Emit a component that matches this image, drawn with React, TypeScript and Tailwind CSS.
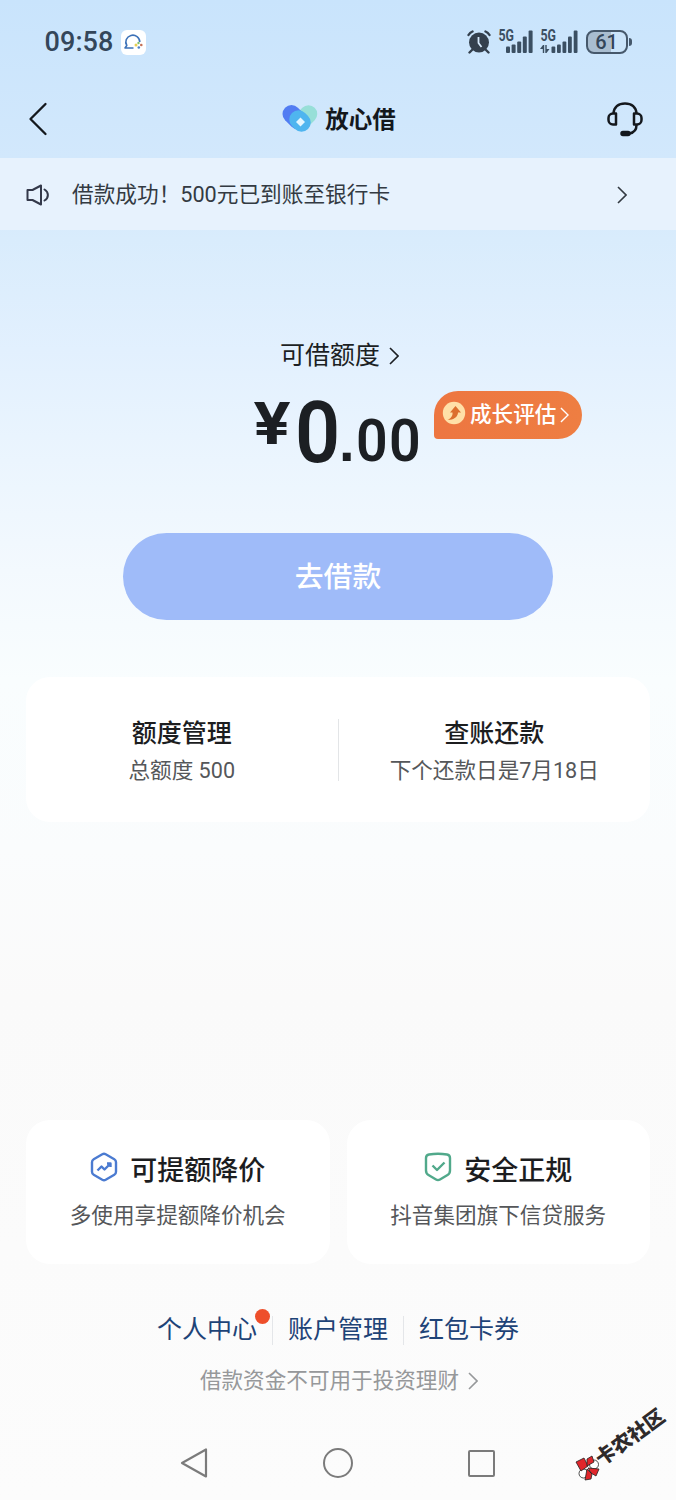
import React from "react";

const services = [
  { title: "额度管理", desc: "总额度 500" },
  { title: "查账还款", desc: "下个还款日是7月18日" },
];

const links = ["个人中心", "账户管理", "红包卡券"];

function Chevron({ className }: { className?: string }) {
  return (
    <svg
      viewBox="0 0 10 18"
      fill="none"
      stroke="currentColor"
      strokeWidth="1.6"
      className={className}
    >
      <path d="M1 1l8 8-8 8" />
    </svg>
  );
}

function Signal({ data }: { data?: boolean }) {
  return (
    <svg
      viewBox="0 -4 38 36"
      className="w-[38px] h-9 overflow-visible text-[#3b4f62]"
    >
      <text
        x="0.5"
        y="13"
        fontSize="16"
        fontWeight="700"
        fill="currentColor"
        textLength="15.5"
        lengthAdjust="spacingAndGlyphs"
      >
        5G
      </text>
      <g fill="currentColor">
        {data ? (
          <>
            <rect x="11.5" y="18.5" width="3.8" height="6.5" rx="1" />
            <rect x="17" y="16.5" width="3.8" height="8.5" rx="1" />
            <rect x="22.5" y="13.5" width="3.8" height="11.5" rx="1" />
            <rect x="28" y="8.5" width="3.8" height="16.5" rx="1" />
            <rect x="33.7" y="2.5" width="3.8" height="22.5" rx="1" />
            <path d="M0 21l3-4h1.200v8H2.800v-4zM9.500 21l-3 4H5.300v-8h1.400v4z" />
          </>
        ) : (
          <>
            <rect x="8" y="18.5" width="4" height="6.5" rx="1" />
            <rect x="13.6" y="16.5" width="4" height="8.5" rx="1" />
            <rect x="19.2" y="13.5" width="4" height="11.5" rx="1" />
            <rect x="24.8" y="8.5" width="4" height="16.5" rx="1" />
            <rect x="30.6" y="2.5" width="4" height="22.5" rx="1" />
          </>
        )}
      </g>
    </svg>
  );
}

function StatusBar() {
  return (
    <div className="h-[80px] pt-[28px] pl-[44.5px] pr-[44px] flex items-start justify-between text-[#34465a]">
      <div className="flex items-center h-7">
        <span className="text-[27px] leading-7 font-medium tracking-[0.1px]">
          09:58
        </span>
        <span className="ml-[7px] w-[25px] h-[25px] rounded-md bg-white flex items-center justify-center">
          <svg viewBox="0 0 22 20" className="w-[22px] h-5" fill="none">
            <path
              d="M11.500 16H3l1.800-2.500a7 6.800 0 1 1 13-3.500"
              stroke="#3d72b8"
              strokeWidth="1.6"
              strokeLinejoin="round"
            />
            <circle cx="14" cy="13" r="1.5" fill="#e9cf52" />
            <circle cx="16.5" cy="11" r="1.2" fill="#7cbd6a" />
            <circle cx="19.3" cy="13" r="1.3" fill="#c56f55" />
            <circle cx="16.8" cy="15.5" r="1.3" fill="#4d80c4" />
          </svg>
        </span>
      </div>
      <div className="flex items-center h-7">
        <svg viewBox="0 0 24 24" className="w-6 h-6 mr-[7px]" fill="none">
          <circle cx="12" cy="12.5" r="10" fill="#34404d" />
          <path
            d="M1.500 5Q3 2.500 5.500 1.500M22.500 5Q21 2.500 18.500 1.500M5 20l-2.500 2.500M19 20l2.500 2.500"
            stroke="#34404d"
            strokeWidth="2.4"
            strokeLinecap="round"
          />
          <path d="M11.500 7v6l3 4" stroke="#d5e8fa" strokeWidth="1.8" />
        </svg>
        <Signal />
        <span className="w-[4px]" />
        <Signal data />
        <span className="ml-[8px] w-[42px] h-[24px] rounded-[8px] border-2 border-[#46586b] bg-linear-to-r from-[#a9bdd0] from-60% to-[#cbe4fa] to-60% flex items-center justify-center text-[20px] leading-none font-medium">
          61
        </span>
        <span className="ml-[1.5px] w-[3px] h-2 rounded-r bg-[#46586b]" />
      </div>
    </div>
  );
}

function Header() {
  return (
    <div className="h-[78px] pl-[28px] pr-[32px] flex items-center justify-between text-[#14181d]">
      <svg
        viewBox="0 0 20 34"
        className="w-5 h-[34px]"
        fill="none"
        stroke="currentColor"
        strokeWidth="2.3"
        strokeLinecap="round"
        strokeLinejoin="round"
      >
        <path d="M17.500 2L2.500 17l15 15" />
      </svg>
      <div className="flex items-center ml-[24px]">
        <svg
          viewBox="0 0 36 30"
          className="w-9 h-[30px] mr-[7px] -translate-y-px"
          strokeLinecap="round"
        >
          <path d="M26.500 11L20 17.500" stroke="#97dfd8" strokeWidth="17.5" />
          <path d="M9.500 11l6.500 6.500" stroke="#527df2" strokeWidth="18" />
          <path d="M16.500 16.500l3 3" stroke="#4fb5ef" strokeWidth="18.5" />
          <path d="M18.500 14.500l4.500 4.500-4.500 4.500-4.500-4.500z" fill="#e4f6ff" />
        </svg>
        <span className="text-[23.5px] leading-8 font-bold translate-y-px">
          放心借
        </span>
      </div>
      <svg
        viewBox="0 0 38 36"
        className="w-[38px] h-9"
        fill="none"
        stroke="currentColor"
        strokeWidth="2.5"
      >
        <path d="M7.500 12.500C8 6 12.500 2.500 19 2.500s11 3.500 11.500 10" />
        <path
          d="M10 12.500H7a4.500 4.500 0 0 0-4.500 4.500v2A4.500 4.500 0 0 0 7 23.500h3zM28 12.500h3a4.500 4.500 0 0 1 4.500 4.500v2a4.500 4.500 0 0 1-4.500 4.500h-3z"
          strokeLinejoin="round"
        />
        <path d="M30.500 24c0 4-2 7.500-7 8.500" />
        <rect x="15.5" y="31" width="8" height="3" rx="1.5" fill="currentColor" />
      </svg>
    </div>
  );
}

function Notice() {
  return (
    <div className="h-[72px] pl-[26px] pr-[49px] flex items-center bg-[#e7f2fd] text-[#333a42]">
      <svg
        viewBox="0 0 24 22"
        className="w-6 h-[22px] mr-[22px] mt-px"
        fill="none"
        stroke="#34394a"
        strokeWidth="2"
        strokeLinejoin="round"
      >
        <path d="M1.500 6h5L15 1.500v19L6.500 16h-5z" />
        <path d="M18.500 5.500c4.500 2.500 4.500 8.500 0 11" strokeLinecap="round" />
      </svg>
      <span className="flex-1 text-[21.66px] leading-8 pt-[2px]">
        借款成功！500元已到账至银行卡
      </span>
      <Chevron className="w-[10px] h-[18px] mt-[2px]" />
    </div>
  );
}

function Amount() {
  return (
    <div className="pt-[109px] flex flex-col items-center text-[#1c1f23]">
      <div className="flex items-center h-8 ml-[3px]">
        <span className="text-[25px] leading-8 pt-[2px]">可借额度</span>
        <Chevron className="w-[10px] h-[18px] ml-[9px] mt-px" />
      </div>
      <div className="h-[103px] w-full pl-[253px] flex items-start">
        <div className="flex items-baseline font-semibold pt-[9px] leading-[104px]">
          <span className="w-[42px] text-[58px] font-['Inter',sans-serif] font-bold origin-left scale-x-115 -translate-y-[17px]">
            ¥
          </span>
          <span className="w-[44px] text-[86px] origin-left scale-x-[0.92] translate-y-px">
            0
          </span>
          <span className="w-[17px] text-[56px] font-bold font-['Liberation_Sans',sans-serif]">
            .
          </span>
          <span className="text-[59px] origin-left scale-x-[0.94] tracking-[1.4px]">
            00
          </span>
        </div>
        {/* Bubble hanging off the amount */}
        <button className="absolute left-[434px] top-[391px] w-[148px] h-[48px] pl-[8px] flex items-center rounded-[24px] rounded-bl-[4px] bg-linear-to-r from-[#ed7641] to-[#ee7e42] text-white">
          <svg viewBox="0 0 24 24" className="w-6 h-6 -translate-y-[2px]">
            <circle cx="12" cy="12" r="11.2" fill="#ffe0a8" />
            <path d="M13.500 5l5.500 6.500h-3c0 4-4 7.500-10.500 7.500 3-1.500 5.500-4 5-7.500H8z" fill="#dc6f2e" />
          </svg>
          <span className="ml-[4px] text-[21.6px] leading-8 font-medium">
            成长评估
          </span>
          <Chevron className="w-[9px] h-[16px] ml-[4px]" />
        </button>
      </div>
    </div>
  );
}

function ServiceCard() {
  return (
    <div className="mx-[26px] mt-[57px] h-[145px] rounded-[24px] bg-white flex items-center">
      {services.map((item, i) => (
        <React.Fragment key={item.title}>
          {i > 0 && <div className="w-px h-[62px] bg-[#e3e5e7]" />}
          <div className="flex-1 flex flex-col items-center pt-[4px]">
            <p className="text-[25px] leading-[37px] font-medium text-[#1c1d1f]">
              {item.title}
            </p>
            <p className="text-[21.6px] leading-[37px] text-[#55575a]">
              {item.desc}
            </p>
          </div>
        </React.Fragment>
      ))}
    </div>
  );
}

function FeatureCard({
  icon,
  title,
  desc,
}: {
  icon: React.ReactNode;
  title: string;
  desc: string;
}) {
  return (
    <div className="flex-1 h-[144px] pt-[31px] rounded-[24px] bg-white flex flex-col items-center">
      <div className="flex items-center h-10">
        {icon}
        <span className="text-[27px] leading-10 font-medium text-[#1c1d1f]">
          {title}
        </span>
      </div>
      <p className="mt-[9px] text-[21.6px] leading-8 text-[#55575a]">{desc}</p>
    </div>
  );
}

export default function App() {
  return (
    <div
      lang="zh-CN"
      className="relative w-[676px] h-[1500px] overflow-hidden font-['Roboto','Noto_Sans_CJK_SC',sans-serif] bg-[linear-gradient(to_bottom,#c9e4fc_0px,#d2e8fc_158px,#d9ecfc_240px,#e2f0fe_350px,#ebf5fe_460px,#f3f9fe_570px,#f9fdfe_680px,#fafcfd_850px,#fafafa_1000px,#fcfcfc_1500px)]"
    >
      <StatusBar />
      <Header />
      <Notice />
      <Amount />

      <button className="mx-auto mt-[59px] w-[430px] h-[87px] flex items-center justify-center rounded-full bg-[#9fbbf9] text-white text-[28.8px] font-medium">
        <span className="pt-[2px]">去借款</span>
      </button>

      <ServiceCard />

      <div className="mx-[26px] mt-[298px] flex gap-[17px]">
        <FeatureCard
          title="可提额降价"
          desc="多使用享提额降价机会"
          icon={
            <svg
              viewBox="0 0 28 30"
              className="w-7 h-[30px] mr-[12px] -translate-y-[4px]"
              fill="none"
              stroke="#4b7bd1"
              strokeWidth="2.4"
              strokeLinejoin="round"
            >
              <path d="M12.300 2.200q1.700-.9 3.400 0l8.600 5q1.700 1 1.700 3v9.600q0 2-1.700 3l-8.600 5q-1.700.9-3.400 0l-8.600-5q-1.700-1-1.700-3v-9.600q0-2 1.700-3z" />
              <path d="M7.500 18.500l4-4 3 3 5.500-5.500M17 11.500h3.500V15" />
            </svg>
          }
        />
        <FeatureCard
          title="安全正规"
          desc="抖音集团旗下信贷服务"
          icon={
            <svg
              viewBox="0 0 28 30"
              className="w-7 h-[30px] mr-[12px] -translate-y-[4px]"
              fill="none"
              stroke="#51a98b"
              strokeWidth="2.4"
              strokeLinejoin="round"
            >
              <path d="M5 2.500q9-1.500 18 0 3 .5 3 3.500v12.500q0 3-2.500 4.500L16 27.500q-2 1.200-4 0L4.500 23Q2 21.500 2 18.500V6q0-3 3-3.500z" />
              <path d="M8.500 13.500l4.500 4.500 7.500-7.500" />
            </svg>
          }
        />
      </div>

      <div className="mt-[48px] flex items-center justify-center h-9 text-[25px] leading-9 text-[#1e4377]">
        {links.map((link, i) => (
          <React.Fragment key={link}>
            {i > 0 && <div className="mx-[15px] w-px h-[29px] bg-[#e4e6e9]" />}
            <a className="relative">
              {link}
              {i === 0 && (
                <span className="absolute -top-[3px] -right-[13px] w-[15px] h-[15px] rounded-full bg-[#ee4f2b]" />
              )}
            </a>
          </React.Fragment>
        ))}
      </div>

      <div className="mt-[17px] pl-[2px] flex items-center justify-center h-8 text-[21.6px] text-[#96989a]">
        <span className="leading-8">借款资金不可用于投资理财</span>
        <Chevron className="w-[10px] h-[18px] ml-[9px]" />
      </div>

      {/* Android navigation keys */}
      <div className="mt-[50px] pl-[180px] pr-[181px] flex items-center justify-between text-[#7b7b7b]">
        <svg
          viewBox="0 0 28 32"
          className="w-7 h-8"
          fill="none"
          stroke="currentColor"
          strokeWidth="2.2"
          strokeLinejoin="round"
        >
          <path d="M26 2.500v27L2 16z" />
        </svg>
        <span className="w-[30px] h-[30px] rounded-full border-2 border-current" />
        <span className="w-[27px] h-[27px] rounded-[2px] border-2 border-current" />
      </div>

      {/* Community watermark */}
      <div className="absolute left-[575px] top-[1455px] flex items-center whitespace-nowrap origin-[13px_13px] -rotate-[36deg]">
        <svg
          viewBox="0 0 26 26"
          className="w-[26px] h-[26px] rotate-[36deg]"
          stroke="#222"
          strokeWidth="0.8"
        >
          <circle cx="8.5" cy="18.5" r="4.500" fill="#fff" />
          <circle cx="19" cy="9.500" r="4.500" fill="#fff" />
          <path d="M1 7l8-4 4 8-7 5z" fill="#e0262b" />
          <path d="M12 11V4l5-3 2 6zM13 13l11 1-3 7-5-3zM12 14l5 5-1 5-6 1z" fill="#e0262b" />
        </svg>
        <span className="-ml-px text-[20px] leading-[26px] font-black text-[#2e2a2b]">
          卡农社区
        </span>
      </div>
    </div>
  );
}
